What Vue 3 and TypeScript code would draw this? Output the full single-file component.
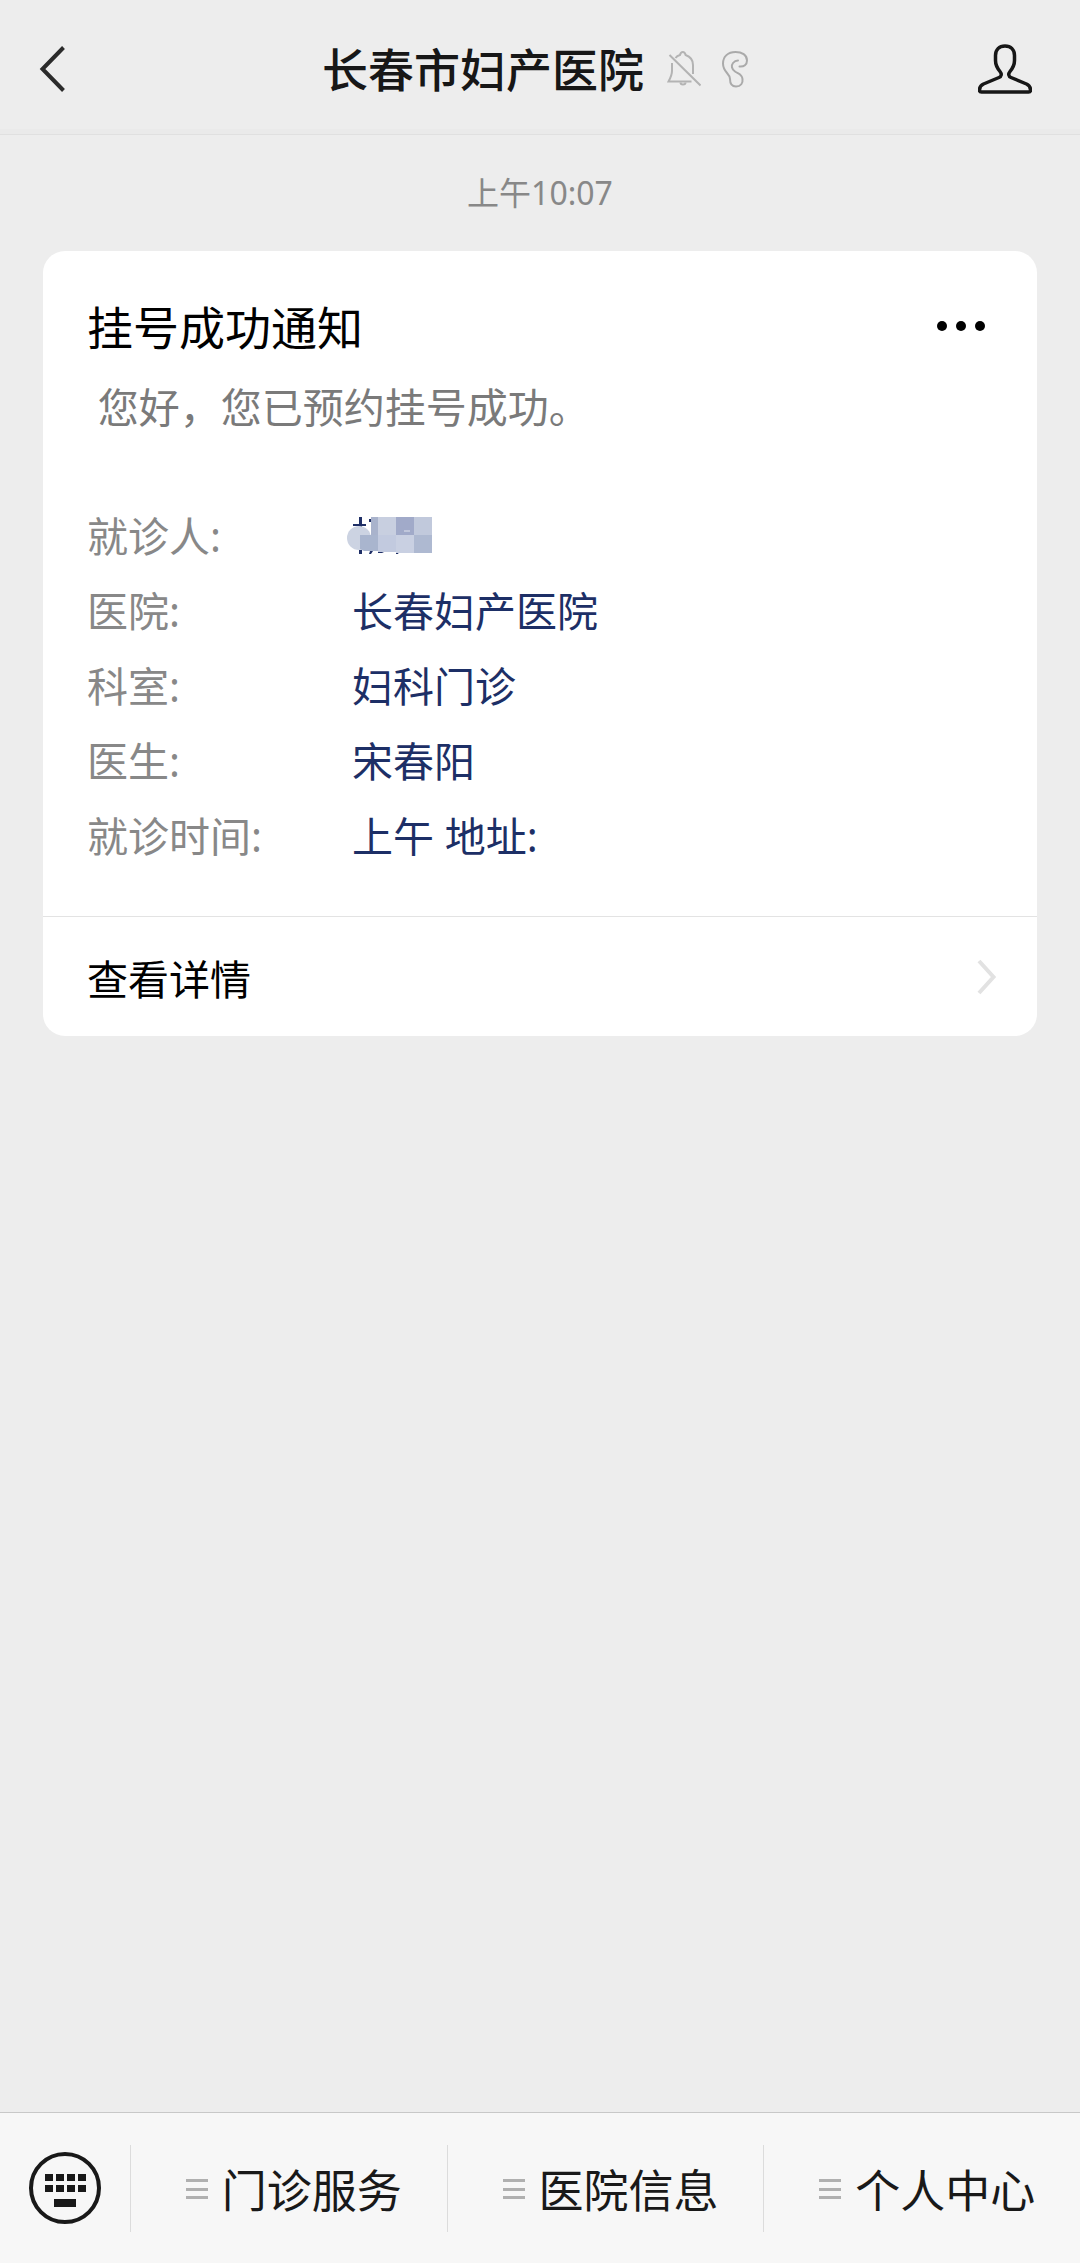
<script setup lang="ts">
interface Field {
  label: string
  value: string
  masked?: boolean
}

const fields: Field[] = [
  { label: '就诊人:', value: '', masked: true },
  { label: '医院:', value: '长春妇产医院' },
  { label: '科室:', value: '妇科门诊' },
  { label: '医生:', value: '宋春阳' },
  { label: '就诊时间:', value: '上午 地址:' },
]

const menus: string[] = ['门诊服务', '医院信息', '个人中心']

const keyColumns = [16, 27, 38, 49]
const keyRows = [22, 33]
</script>

<template>
  <div class="page">
    <header class="topbar">
      <button class="icon-button back" type="button" aria-label="返回">
        <svg width="28" height="48" viewBox="0 0 28 48" fill="none" stroke="#2b2b2b" stroke-width="4">
          <path d="M24.500 2.500 3.500 24 24.500 45.500" />
        </svg>
      </button>
      <div class="heading">
        <h1>长春市妇产医院</h1>
        <svg class="bell" width="34" height="38" viewBox="0 0 34 38" fill="none" stroke="#b3b3b3" stroke-width="2">
          <path d="M5 13v8c0 4-1 6-3.500 10.500H24.500M8.500 8c1-1.500 2.500-2.500 4.500-3 .5-2 1.500-3 2.800-3s2.300 1 2.800 3C23 6.500 26 10 26 15v9" />
          <path d="M13.500 32.500a2.500 2 0 0 0 5 0M2.500 5 33.500 35.500" />
        </svg>
        <svg class="ear" width="28" height="38" viewBox="0 0 28 38" fill="none" stroke="#aaa" stroke-width="2" stroke-linecap="round">
          <path d="M18.500 16.500c4.500.5 7.500-2 7.500-6C26 5 21 2 14.500 2 7 2 2 6.500 2 13.500c0 9 7 9.500 7 15.500 0 5 2 7.500 6 7.500 5 0 7-3.500 6.500-7.500-.5-5-4-5-7.500-7.500-3.500-2.500-4-6-2-8.500 1.200-1.500 3-2.500 5-2.500" />
        </svg>
      </div>
      <button class="icon-button profile" type="button" aria-label="公众号资料">
        <svg width="54" height="52" viewBox="0 0 54 52" fill="none" stroke="#171717" stroke-width="3.500" stroke-linejoin="round">
          <path d="M27 3c-6 0-9.500 4-9.500 9.500v5c0 5 2 8 4.500 11 2 2.500 1.500 5-1 6L5.500 41c-3 1.500-4 3.500-4 6 0 1.500.5 2 2 2h47c1.500 0 2-.5 2-2 0-2.500-1-4.500-4-6L33 34.500c-2.500-1-3-3.500-1-6 2.500-3 4.500-6 4.500-11v-5C36.500 7 33 3 27 3Z" />
        </svg>
      </button>
    </header>

    <main class="chat">
      <time class="stamp" datetime="10:07">上午10:07</time>

      <article class="card">
        <div class="card-body">
          <div class="card-head">
            <h2>挂号成功通知</h2>
            <button class="icon-button" type="button" aria-label="更多">
              <svg width="64" height="12" viewBox="0 0 64 12" fill="#000">
                <circle cx="13" cy="5" r="5" />
                <circle cx="32" cy="5" r="5" />
                <circle cx="51" cy="5" r="5" />
              </svg>
            </button>
          </div>
          <p class="greeting">&nbsp;您好，您已预约挂号成功。</p>
          <dl class="fields">
            <template v-for="field in fields" :key="field.label">
              <dt>{{ field.label }}</dt>
              <dd>
                <svg v-if="field.masked" class="mask" width="86" height="38" viewBox="0 0 86 38" role="img" aria-label="已打码">
                  <g fill="#1f2f66">
                    <path d="M12 0h3v10h-3zM6 7h13v2H6zM22 2h3v3h-3zM12 33h3v4h-3zM23 34h3l-2 3h-2zM31 35h6l-2 1h-4zM49 35h3l-1 2h-2zM71 35h8l-3 1h-3z" />
                  </g>
                  <circle cx="12" cy="21" r="12" fill="#ccd3e2" />
                  <path d="M24 0h7v18h-7z" fill="#a9b3cc" />
                  <path d="M13 18h18v16H17l-4-2z" fill="#a9b5ce" />
                  <path d="M31 0h18v18H31z" fill="#c8cfe0" />
                  <path d="M49 0h18v18H49z" fill="#a1aac9" />
                  <path d="M67 0h18v18H67z" fill="#c1c9dc" />
                  <path d="M31 18h18v17H31z" fill="#c2cadf" />
                  <path d="M49 18h18v18H49z" fill="#c9d0e2" />
                  <path d="M67 18h18v18H67z" fill="#aeb9d1" />
                  <path d="M57 14h6" stroke="#dfe3ee" />
                </svg>
                <template v-else>{{ field.value }}</template>
              </dd>
            </template>
          </dl>
        </div>
        <a class="detail" href="#">
          <span>查看详情</span>
          <svg width="20" height="36" viewBox="0 0 20 36" fill="none" stroke="#e2e2e2" stroke-width="4">
            <path d="M2 2 16.500 18 2 34" />
          </svg>
        </a>
      </article>
    </main>

    <nav class="menubar">
      <button class="icon-button keyboard" type="button" aria-label="键盘">
        <svg width="74" height="74" viewBox="0 0 74 74" fill="#191919">
          <circle cx="37" cy="37" r="34" fill="none" stroke="#191919" stroke-width="4" />
          <template v-for="y in keyRows" :key="y">
            <rect v-for="x in keyColumns" :key="x" :x="x + 1" :y="y + 1" width="8" height="7" />
          </template>
          <rect x="26" y="48" width="22" height="8" />
        </svg>
      </button>
      <button v-for="menu in menus" :key="menu" class="menu" type="button">
        <svg width="22" height="24" viewBox="0 0 22 24" fill="#b0b0b0" aria-hidden="true">
          <path d="M0 3h22v3H0zM0 12h22v3H0zM0 20h22v3H0z" />
        </svg>
        <span>{{ menu }}</span>
      </button>
    </nav>
  </div>
</template>

<style>
body {
  margin: 0;
  background: #ededed;
}
</style>

<style scoped>
.page {
  display: flex;
  flex-direction: column;
  min-height: 100vh;
  background: #ededed;
  color: #000;
  font-family: "Noto Sans", "Noto Sans CJK SC", sans-serif;
}

h1,
h2,
p,
dl,
dd {
  margin: 0;
}

svg {
  display: block;
  flex: none;
}

button {
  padding: 0;
  border: 0;
  background: none;
  color: inherit;
  font: inherit;
  cursor: pointer;
}

.topbar {
  display: grid;
  grid-template-columns: 1fr auto 1fr;
  align-items: center;
  height: 130px;
  padding: 4px 48px 0 39px;
  border-bottom: 1px solid #e0e0e0;
  background: linear-gradient(#ededed 129px, #eaeaea 129px);
}

.back {
  justify-self: start;
}

.profile {
  justify-self: end;
}

.heading {
  display: flex;
  align-items: center;
}

h1 {
  color: #171717;
  font-size: 46px;
  font-weight: 500;
  line-height: 64px;
}

.bell {
  margin-left: 23px;
}

.ear {
  margin-left: 20px;
}

.chat {
  display: flex;
  flex: 1;
  flex-direction: column;
  padding: 0 43px;
}

.stamp {
  padding: 36px 0;
  color: #888;
  font-size: 32px;
  line-height: 44px;
  text-align: center;
}

.card {
  overflow: hidden;
  border-radius: 22px;
  background: #fff;
}

.card-body {
  padding: 44px 44px 42px;
}

.card-head {
  display: flex;
  align-items: center;
  justify-content: space-between;
}

h2 {
  font-size: 46px;
  font-weight: 400;
  line-height: 64px;
}

.greeting {
  margin-top: 16px;
  color: #7a7a7a;
  font-size: 41px;
  line-height: 64px;
}

.fields {
  display: grid;
  grid-template-columns: 265px 1fr;
  margin-top: 60px;
  font-size: 41px;
  line-height: 75px;
}

dt {
  color: #888;
}

dd {
  color: #1d2f66;
}

.mask {
  margin: 18px 0 0 -5px;
}

.detail {
  display: flex;
  align-items: center;
  justify-content: space-between;
  height: 119px;
  padding: 0 40px 0 44px;
  border-top: 1px solid #e3e3e3;
  color: #000;
  font-size: 41px;
  text-decoration: none;
}

.menubar {
  display: flex;
  align-items: center;
  height: 150px;
  border-top: 1px solid #c8c8c8;
  background: #f7f7f7;
}

.keyboard {
  display: flex;
  flex: none;
  justify-content: center;
  width: 130px;
}

.menu {
  display: flex;
  flex: 1;
  align-items: center;
  justify-content: center;
  gap: 14px;
  height: 87px;
  padding-left: 10px;
  border-left: 1px solid #dcdcdc;
  color: #191919;
  font-size: 45px;
}
</style>
